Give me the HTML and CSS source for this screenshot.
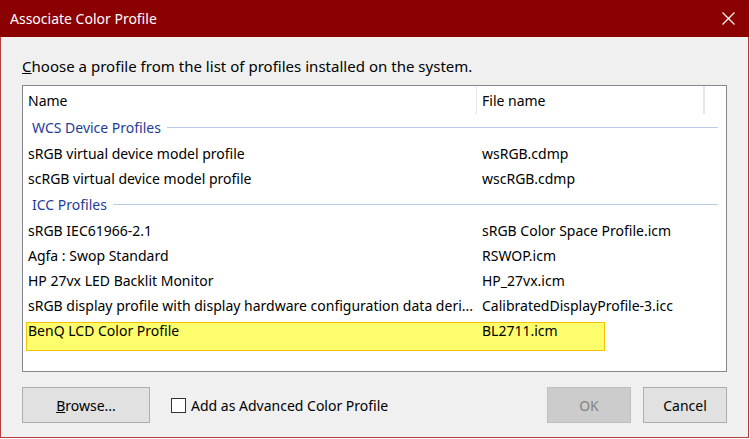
FILE: index.html
```html
<!DOCTYPE html>
<html>
<head>
<meta charset="utf-8">
<link rel="stylesheet" href="styles.css">
</head>
<body>
<div class="window">
  <div class="titlebar">
    <span class="title">Associate Color Profile</span>
    <svg class="close" width="13" height="13" viewBox="0 0 13 13"><path d="M0.5 0.5L12.5 12.5M12.5 0.5L0.5 12.5" stroke="#fff" stroke-width="1.2" fill="none"/></svg>
  </div>
  <div class="content">
    <p class="prompt"><u>C</u>hoose a profile from the list of profiles installed on the system.</p>
    <div class="list">
      <div class="header">
        <div class="col-name">Name</div>
        <div class="col-file">File name</div>
        <div class="col-rest"></div>
      </div>
      <div class="group"><span>WCS Device Profiles</span><i></i></div>
      <div class="row"><div class="col-name">sRGB virtual device model profile</div><div class="col-file">wsRGB.cdmp</div></div>
      <div class="row"><div class="col-name">scRGB virtual device model profile</div><div class="col-file">wscRGB.cdmp</div></div>
      <div class="group"><span>ICC Profiles</span><i></i></div>
      <div class="row"><div class="col-name">sRGB IEC61966-2.1</div><div class="col-file">sRGB Color Space Profile.icm</div></div>
      <div class="row"><div class="col-name">Agfa : Swop Standard</div><div class="col-file">RSWOP.icm</div></div>
      <div class="row"><div class="col-name">HP 27vx LED Backlit Monitor</div><div class="col-file">HP_27vx.icm</div></div>
      <div class="row"><div class="col-name">sRGB display profile with display hardware configuration data deri...</div><div class="col-file">CalibratedDisplayProfile-3.icc</div></div>
      <div class="row hl-row"><div class="highlight"></div><div class="col-name">BenQ LCD Color Profile</div><div class="col-file">BL2711.icm</div></div>
    </div>
    <div class="footer">
      <button class="btn browse"><u>B</u>rowse...</button>
      <label class="check"><span class="box"></span>Add as Advanced Color Profile</label>
      <div class="spacer"></div>
      <button class="btn disabled">OK</button>
      <button class="btn">Cancel</button>
    </div>
  </div>
</div>
</body>
</html>
```

FILE: styles.css
```css
html, body { margin: 0; padding: 0; background: #fff; }
body { font-family: "Noto Sans", "Open Sans", sans-serif; font-size: 14px; color: #000; }
.window {
  width: 749px; height: 438px; box-sizing: border-box;
  border: 1px solid #b23b3b; border-top: none;
  background: #f0f0f0; display: flex; flex-direction: column;
}
.titlebar {
  height: 37px; background: #8b0000; margin: 0 -1px; padding: 0 14px 0 10px;
  display: flex; align-items: center; justify-content: space-between; color: #fff;
}
.title { font-size: 14px; }
.content { padding: 0 21px 0 21px; flex: 1; display: flex; flex-direction: column; }
.prompt { margin: 18px 0 7px 0; line-height: 23px; font-size: 15px; letter-spacing: 0.02px; }
.prompt u { text-decoration-thickness: 1px; }
.list {
  position: relative; height: 287px; background: #fff; border: 1px solid #828790;
  box-sizing: border-box; overflow: hidden;
}
.header { display: flex; height: 28px; align-items: center; }
.header > div { height: 100%; display: flex; align-items: center; box-sizing: border-box; border-right: 1px solid #e5e5e5; }
.col-name { width: 454px; padding-left: 5px; box-sizing: border-box; white-space: nowrap; overflow: hidden; }
.col-file { width: 227px; padding-left: 5px; box-sizing: border-box; white-space: nowrap; }
.header .col-rest { width: 1px; }
.group { display: flex; align-items: center; height: 27px; padding-left: 9px; padding-right: 8px; color: #1e3c96; }
.group i { flex: 1; height: 1px; background: #b9cbe9; margin-left: 6px; }
.row { display: flex; height: 25px; align-items: center; position: relative; }
.hl-row .col-name, .hl-row .col-file { position: relative; }
.highlight {
  position: absolute; left: 3px; top: 4px; width: 579px; height: 29px;
  background: #ffff6e; border: 1px solid #f4c400; box-sizing: border-box;
}
.footer { display: flex; align-items: center; margin-top: 15px; height: 36px; }
.btn {
  font: inherit; height: 36px; background: #e1e1e1; border: 1px solid #adadad;
  padding: 0; color: #000;
}
.browse { width: 128px; }
.btn.disabled { background: #cccccc; border-color: #bfbfbf; color: #838383; width: 84px; margin-right: 12px; }
.footer .btn:last-child { width: 84px; }
.check { display: flex; align-items: center; margin-left: 21px; }
.box { width: 13px; height: 13px; border: 1px solid #333; background: #fff; margin-right: 5px; }
.spacer { flex: 1; }
```
